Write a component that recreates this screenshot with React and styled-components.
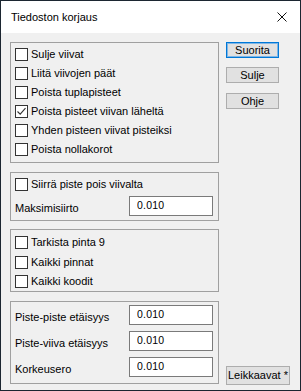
import { useState } from "react";
import styled, { createGlobalStyle } from "styled-components";

const GlobalStyle = createGlobalStyle`
    html, body {
        margin: 0;
        padding: 0;
        background: #f0f0f0;
    }
    * {
        box-sizing: border-box;
    }
`

const Window = styled.div`
    width: 301px;
    height: 391px;
    border: 1px solid #1c2631;
    background: #f0f0f0;
    display: flex;
    flex-direction: column;
    font-family: "Liberation Sans", Arial, sans-serif;
    font-size: 11px;
    line-height: 13px;
    color: #000;
    overflow: hidden;
`

const TitleBar = styled.div`
    height: 32px;
    flex-shrink: 0;
    background: #fff;
    display: flex;
    align-items: center;
    justify-content: space-between;
    padding: 0 13px 0 10px;
`

const Title = styled.span`
    font-size: 11px;
    padding-top: 1px;
`

const CloseIcon = styled.svg`
    width: 10px;
    height: 10px;
`

const Body = styled.div`
    flex: 1;
    min-height: 0;
    display: flex;
    padding: 9px 10px 5px 9px;
    gap: 7px;
`

const LeftColumn = styled.div`
    width: 209px;
    flex-shrink: 0;
    display: flex;
    flex-direction: column;
`

const Group = styled.div`
    height: ${p => p.$h}px;
    margin-bottom: ${p => p.$mb || 0}px;
    flex-shrink: 0;
    border: 1px solid #a0a0a0;
    padding: ${p => p.$pad || "2px 4px 0 4px"};
    display: flex;
    flex-direction: column;
`

const CheckRow = styled.label`
    height: ${p => p.$h || 19}px;
    flex-shrink: 0;
    display: flex;
    align-items: center;
    gap: 3px;
    white-space: nowrap;
    cursor: default;
`

const Box = styled.span`
    width: 13px;
    height: 13px;
    border: 1px solid #333;
    background: #fff;
    display: flex;
    align-items: center;
    justify-content: center;
    flex-shrink: 0;
`

const FieldRow = styled.div`
    height: ${p => p.$h || 26}px;
    flex-shrink: 0;
    display: flex;
    align-items: center;
    justify-content: space-between;
    padding-right: 1px;
`

const FieldLabel = styled.span`
    padding-top: 5px;
`

const Input = styled.input`
    width: 84px;
    height: 20px;
    border: 1px solid #7a7a7a;
    background: #fff;
    font-family: "Liberation Sans", Arial, sans-serif;
    font-size: 10.5px;
    letter-spacing: 0.2px;
    padding: 0 0 2px 7px;
    color: #000;
    outline: none;
`

const RightColumn = styled.div`
    flex: 1;
    display: flex;
    flex-direction: column;
    padding-top: 0;
`

const Button = styled.button`
    width: ${p => p.$w || 53}px;
    height: ${p => p.$h || 16}px;
    margin-bottom: ${p => p.$mb || 0}px;
    flex-shrink: 0;
    border: 1px solid ${p => (p.$default ? "#0078d7" : "#adadad")};
    background: #e1e1e1;
    box-shadow: ${p => (p.$default ? "inset 0 0 0 1px #7fb6e6" : "none")};
    font-family: "Liberation Sans", Arial, sans-serif;
    font-size: 11px;
    color: #000;
    padding: 0 1px;
    line-height: 13px;
    white-space: nowrap;
    text-align: ${p => p.$align || "center"};
`

const Spacer = styled.div`
    flex: 1;
`

function Check({ label, checked, h }) {
    const [on, setOn] = useState(checked);
    return (
        <CheckRow $h={h} onClick={() => setOn(!on)}>
            <Box>
                {on && (
                    <svg width="11" height="11" viewBox="0 0 11 11">
                        <path d="M1.5 5.5 L4.2 8.2 L9.5 2.2" fill="none" stroke="#333" strokeWidth="1.1" />
                    </svg>
                )}
            </Box>
            {label}
        </CheckRow>
    );
}

export default function App() {
    return (
        <>
            <GlobalStyle />
            <Window>
                <TitleBar>
                    <Title>Tiedoston korjaus</Title>
                    <CloseIcon viewBox="0 0 10 10">
                        <path d="M0.5 0.5 L9.5 9.5 M9.5 0.5 L0.5 9.5" stroke="#111" strokeWidth="1" />
                    </CloseIcon>
                </TitleBar>
                <Body>
                    <LeftColumn>
                        <Group $h={121} $mb={9}>
                            <Check label="Sulje viivat" />
                            <Check label="Liitä viivojen päät" />
                            <Check label="Poista tuplapisteet" />
                            <Check label="Poista pisteet viivan läheltä" checked />
                            <Check label="Yhden pisteen viivat pisteiksi" />
                            <Check label="Poista nollakorot" />
                        </Group>
                        <Group $h={49} $mb={8}>
                            <Check label="Siirrä piste pois viivalta" />
                            <FieldRow $h={24}>
                                <FieldLabel>Maksimisiirto</FieldLabel>
                                <Input defaultValue="0.010" />
                            </FieldRow>
                        </Group>
                        <Group $h={63} $mb={9} $pad="3px 4px 0 4px">
                            <Check label="Tarkista pinta 9" h={19.5} />
                            <Check label="Kaikki pinnat" h={19.5} />
                            <Check label="Kaikki koodit" h={19.5} />
                        </Group>
                        <Group $h={83} $pad="0 4px 0 4px">
                            <FieldRow>
                                <FieldLabel>Piste-piste etäisyys</FieldLabel>
                                <Input defaultValue="0.010" />
                            </FieldRow>
                            <FieldRow>
                                <FieldLabel>Piste-viiva etäisyys</FieldLabel>
                                <Input defaultValue="0.010" />
                            </FieldRow>
                            <FieldRow>
                                <FieldLabel>Korkeusero</FieldLabel>
                                <Input defaultValue="0.010" />
                            </FieldRow>
                        </Group>
                    </LeftColumn>
                    <RightColumn>
                        <Button $default $mb={9}>Suorita</Button>
                        <Button $mb={10}>Sulje</Button>
                        <Button>Ohje</Button>
                        <Spacer />
                        <Button $w={64} $h={19} $align="left">Leikkaavat *</Button>
                    </RightColumn>
                </Body>
            </Window>
        </>
    );
}
